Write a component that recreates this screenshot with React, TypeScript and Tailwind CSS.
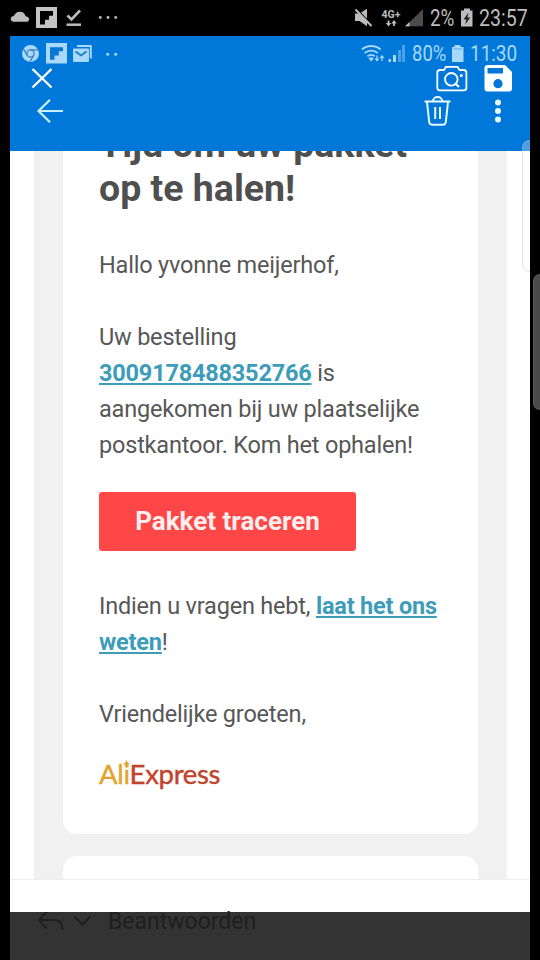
import type { ReactNode } from 'react'

interface IconProps {
  x: number
  y: number
  w: number
  h: number
  className?: string
  children: ReactNode
}

// The shapes are drawn in screen units, x and y give the origin of the icon
const Icon = ({ x, y, w, h, className = '', children }: IconProps) => (
  <svg width={w} height={h} viewBox={`${x} ${y} ${w} ${h}`} fill="none" className={`shrink-0 ${className}`}>
    {children}
  </svg>
)

const StatusBar = () => (
  <div className="flex h-9 items-center pl-2.5 text-[#bcbcbc]">
    <Icon x={10} y={8} w={20} h={20}>
      <path d="M13 21.800a2.900 2.900 0 0 1-.3-5.600l1.500-.6a6 6 0 0 1 11.300.4l1.700.7a2.600 2.600 0 0 1-.5 5.100Z" fill="currentColor" />
    </Icon>
    <Icon x={36} y={7} w={21} h={22} className="ml-1.5">
      <path d="M36 7h21v21H36z" fill="#c4c4c4" />
      <path d="M40 11h13v4.7h-4v4h-4v4.8h-5z" fill="#000" />
    </Icon>
    <Icon x={66} y={8} w={16} h={20} className="ml-[9px]">
      <path d="m67.500 15.500 4 4 8.500-9" stroke="currentColor" strokeWidth="2.600" />
      <path d="M66.500 24.700h14.500" stroke="currentColor" strokeWidth="2.500" />
    </Icon>
    <Icon x={98} y={8} w={20} h={20} className="ml-4">
      <g fill="currentColor">
        <circle cx="100.300" cy="17.500" r="1.400" />
        <circle cx="108" cy="17.500" r="1.400" />
        <circle cx="115.700" cy="17.500" r="1.400" />
      </g>
    </Icon>

    <Icon x={353} y={8} w={19} h={20} className="ml-auto">
      <path d="M354 13.500h4.500l7.500-4.800v17.500L358.500 21H354z" fill="currentColor" />
      <path d="m353.500 7.500 17 17.500" stroke="#000" strokeWidth="2.500" />
      <path d="m354.500 9.500 16 16.500" stroke="currentColor" strokeWidth="2" />
    </Icon>
    <div className="ml-2 flex w-5 flex-col items-center">
      <span className="text-[10.500px] leading-[9px] font-bold">4G+</span>
      <Icon x={385} y={19} w={11} h={7} className="mt-px">
        <path d="M387.500 19.500v4M393 25v-4" stroke="currentColor" strokeWidth="1.800" />
        <path d="m384.800 22 2.700 3.500 2.700-3.500zM390.300 22.500l2.700-3.500 2.700 3.500z" fill="currentColor" />
      </Icon>
    </div>
    <Icon x={405} y={8} w={18} h={20} className="ml-1">
      <path d="M423 9v17.200h-17.500z" fill="#4b4b4b" />
      <path d="M409.500 22v4.200H405z" fill="currentColor" />
    </Icon>
    <div className="ml-[7px] w-[31px] pt-0.5">
      <span className="inline-block origin-left scale-x-[0.82] text-[23px] leading-8">2%</span>
    </div>
    <Icon x={461} y={8} w={12} h={20}>
      <path d="M464 8.500h6v2h2.500v16H461v-16h3z" fill="currentColor" />
      <path d="m468.500 12.500-5 7h2.800l-1 5 5-7h-2.800z" fill="#222" />
    </Icon>
    <div className="ml-1.5 w-[61px] pt-0.5">
      <span className="inline-block origin-left scale-x-[0.85] text-[23px] leading-8">23:57</span>
    </div>
  </div>
)

const PhoneStatus = () => (
  <div className="flex h-7 items-center pt-[9px] pb-[2px] pl-3 text-[#a8d8fb]">
    <Icon x={22} y={44} w={18} h={19}>
      <circle cx="30.500" cy="53.500" r="8.500" fill="currentColor" />
      <circle cx="30.500" cy="53.500" r="3.600" stroke="#3c82bd" strokeWidth="1.300" />
      <path d="M30.500 49.900h7.700M27.300 55.300l-4-6.700M33.700 55.300l-3.900 6.700" stroke="#3c82bd" strokeWidth="1.300" />
    </Icon>
    <Icon x={46} y={43} w={21} h={21} className="ml-1.5">
      <path d="M46 43h21v20.500H46z" fill="currentColor" />
      <path d="M50 47.300h13v4h-4.200v4.200h-4.300v4.200H50z" fill="#0878d3" />
    </Icon>
    <Icon x={72} y={44} w={21} h={19} className="ml-[5px]">
      <path d="M77 46h13.800v12.500" stroke="currentColor" strokeWidth="2" />
      <rect x="73" y="48.500" width="16" height="13.500" rx="1" fill="currentColor" />
      <path d="m75.500 51.500 5.500 4 5.500-4" stroke="#187cca" strokeWidth="1.800" />
    </Icon>
    <Icon x={105} y={43} w={14} h={20} className="ml-3">
      <circle cx="107.700" cy="53.200" r="1.500" fill="currentColor" />
      <circle cx="115.700" cy="53.200" r="1.500" fill="currentColor" />
    </Icon>

    <Icon x={361} y={43} w={24} h={20} className="ml-auto">
      <g stroke="currentColor" strokeWidth="1.800">
        <path d="M362 48.500a14 14 0 0 1 18.500 0" />
        <path d="M364.700 52a10 10 0 0 1 13 0" />
        <path d="M367.500 55.300a6 6 0 0 1 7.300 0" />
        <path d="M377 54.500v5M382 60v-5" strokeWidth="1.300" />
      </g>
      <path d="m368.500 57.500 2.700 3 2.500-3a3.700 3.700 0 0 0-5.200 0zM374.500 57.500l2.500 3 2.500-3zM379.500 57l2.500-3 2.500 3z" fill="currentColor" />
    </Icon>
    <Icon x={388} y={44} w={17} h={19} className="ml-[3px]">
      <path d="M388.500 59h2.500v3h-2.500zM393 55h3v7h-3z" fill="currentColor" />
      <path d="M398 50h3v12h-3zM402 45h3v17h-3z" fill="#4ba2e5" />
    </Icon>
    <div className="ml-[7px] w-[40px] pt-1">
      <span className="inline-block origin-left scale-x-[0.84] text-[22px] leading-[17px]">80%</span>
    </div>
    <Icon x={452} y={44} w={12} h={19}>
      <path d="M454.500 45h6v2h3v15H452V47h2.500z" fill="currentColor" />
      <path d="M453.500 49h8.500" stroke="#55aaea" strokeWidth="1" />
    </Icon>
    <div className="ml-1.5 w-[60px] pt-1">
      <span className="inline-block origin-left scale-x-[0.86] text-[22px] leading-[17px]">11:30</span>
    </div>
  </div>
)

const Header = () => (
  <header className="relative z-10 h-[115px] shrink-0 bg-[#0078d9] text-white">
    <PhoneStatus />
    <div className="flex h-[30px] items-center pr-4 pb-0.5 pl-5">
      <Icon x={30} y={64} w={24} h={28}>
        <path d="m32.500 69 19 18.500M51.500 69l-19 18.500" stroke="currentColor" strokeWidth="2.400" />
      </Icon>
      <Icon x={436} y={64} w={32} h={28} className="ml-auto">
        <g stroke="currentColor" strokeWidth="1.800" strokeLinejoin="round">
          <path d="M440 70h4l2-3.200h11.500l2 3.200h4.200a2.700 2.700 0 0 1 2.700 2.700v15a2.700 2.700 0 0 1-2.700 2.700H440a2.700 2.700 0 0 1-2.700-2.700v-15A2.700 2.700 0 0 1 440 70Z" />
          <circle cx="451.300" cy="79.300" r="6.300" />
          <path d="m455.500 83.500 3.500 3.500" strokeWidth="2.200" />
        </g>
        <circle cx="461.300" cy="75.500" r="1.500" fill="currentColor" />
      </Icon>
      <Icon x={484} y={64} w={30} h={28} className="ml-4">
        <path d="M487.500 65h17.500l7 7v16.500a3 3 0 0 1-3 3h-21.500a3 3 0 0 1-3-3V68a3 3 0 0 1 3-3z" fill="currentColor" />
        <path d="M487.500 68h15.500v5.500h-15.500z" fill="#0078d9" />
        <circle cx="498" cy="83.700" r="4.600" fill="#0078d9" />
      </Icon>
    </div>
    <div className="flex h-[34px] items-center pr-[26px] pl-[26px] text-[#e6faff]">
      <Icon x={36} y={98} w={28} h={26}>
        <path d="M63 111H38.500M50 99.800 38.500 111 50 122.200" stroke="#c9f0fb" strokeWidth="2.200" />
      </Icon>
      <Icon x={423} y={95} w={29} h={32} className="ml-auto">
        <g stroke="currentColor" strokeWidth="2">
          <path d="M424.500 101.500h26" />
          <path d="M433 101a4.600 4 0 0 1 9.200 0" />
          <path d="m427 102 2.200 20a3 3 0 0 0 3 2.700h10.600a3 3 0 0 0 3-2.700l2.200-20" strokeLinejoin="round" />
          <path d="M435.200 107v12M440 107v12" />
        </g>
      </Icon>
      <Icon x={492} y={98} w={12} h={26} className="ml-10">
        <circle cx="498" cy="102.500" r="3" fill="currentColor" />
        <circle cx="498" cy="111" r="3" fill="currentColor" />
        <circle cx="498" cy="119.500" r="3" fill="currentColor" />
      </Icon>
    </div>
  </header>
)

const MailLink = ({ children }: { children: ReactNode }) => (
  <a href="#" className="font-bold text-[#3d9cba] underline decoration-2 underline-offset-2">
    {children}
  </a>
)

const Mail = () => (
  <main className="mr-[23px] ml-6 h-[728px] overflow-hidden bg-[#f1f1f1] px-[29px]">
    <article className="flow-root h-[683px] rounded-b-[14px] bg-white px-9 text-[23.500px] leading-9 tracking-[-0.2px] text-[#575757]">
      <h1 className="-mt-[29px] text-[37.500px] leading-[44px] font-bold tracking-normal whitespace-nowrap text-[#4f4f4f]">
        Tijd om uw pakket
        <br />
        op te halen!
      </h1>
      <p className="mt-[37px]">Hallo yvonne meijerhof,</p>
      <p className="mt-9 whitespace-nowrap">
        Uw bestelling
        <br />
        <MailLink>3009178488352766</MailLink> is
        <br />
        aangekomen bij uw plaatselijke
        <br />
        postkantoor. Kom het ophalen!
      </p>
      <button className="mt-[29px] block h-[59px] w-[257px] rounded-[3px] bg-[#ff4747] pb-0.5 text-[26px] font-bold tracking-normal text-[#ffeeee]">
        Pakket traceren
      </button>
      <p className="mt-[37px] whitespace-nowrap">
        Indien u vragen hebt, <MailLink>laat het ons</MailLink>
        <br />
        <MailLink>weten</MailLink>!
      </p>
      <p className="mt-9">Vriendelijke groeten,</p>
      <div className="relative mt-6 font-['Lato',sans-serif] text-[27.500px] leading-9 tracking-[-0.3px] whitespace-nowrap text-[#c2432c] [-webkit-text-stroke:0.4px]">
        <span className="text-[#e5a32e]">Ali</span>Express
        {/* star on the dot of the i */}
        <svg width="7" height="7" viewBox="0 0 7 7" className="absolute top-1 left-[24px] text-[#e5a32e]">
          <path d="M3.500 0 4.600 2.400 7 3.500 4.600 4.600 3.500 7 2.400 4.600 0 3.500 2.400 2.400Z" fill="currentColor" />
        </svg>
      </div>
    </article>
    <div className="mt-[22px] h-20 rounded-t-[14px] bg-white" />
  </main>
)

const ReplyBar = () => (
  <footer className="h-[81px] border-t border-[#eeeeee] bg-white">
    <div className="mt-8 flex h-12 items-start bg-[#333333] pl-[26px] text-[#1f1f1f]">
      <Icon x={36} y={912} w={28} h={20}>
        <path d="M47 911.500 38.500 920l8.500 8.500M38.500 920H54q8.500 0 8.500 10" stroke="currentColor" strokeWidth="2" />
      </Icon>
      <Icon x={73} y={912} w={20} h={20} className="ml-[9px]">
        <path d="m74.500 916.500 8 8 8-8" stroke="currentColor" strokeWidth="2" />
      </Icon>
      <span className="-mt-1 ml-[15px] text-[23px] leading-7">Beantwoorden</span>
    </div>
  </footer>
)

const App = () => {
  return (
    <div className="relative h-[960px] w-[540px] overflow-hidden bg-black font-['Roboto',sans-serif]">
      <StatusBar />
      <div className="mx-2.5 h-[924px] overflow-hidden bg-white">
        <Header />
        <Mail />
        <ReplyBar />
      </div>
      {/* edge panel handles */}
      <div className="absolute top-[140px] left-[522px] z-20 h-[132px] w-2 rounded-l-lg border border-r-0 border-[#bbbbbb]/40 bg-white/30" />
      <div className="absolute top-[274px] right-0 h-[136px] w-[7px] rounded-l-[7px] border border-r-0 border-[#5b5b5b] bg-[#4b4b4b]" />
    </div>
  )
}

export default App
